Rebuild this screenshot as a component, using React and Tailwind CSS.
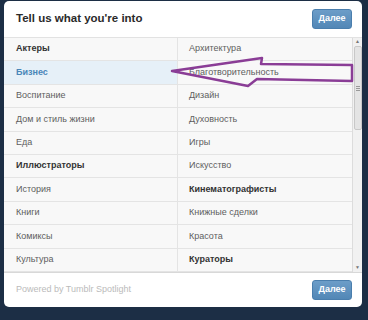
import React from 'react';

const rows = [
  [{ t: 'Актеры', b: true }, { t: 'Архитектура' }],
  [{ t: 'Бизнес', sel: true }, { t: 'Благотворительность' }],
  [{ t: 'Воспитание' }, { t: 'Дизайн' }],
  [{ t: 'Дом и стиль жизни' }, { t: 'Духовность' }],
  [{ t: 'Еда' }, { t: 'Игры' }],
  [{ t: 'Иллюстраторы', b: true }, { t: 'Искусство' }],
  [{ t: 'История' }, { t: 'Кинематографисты', b: true }],
  [{ t: 'Книги' }, { t: 'Книжные сделки' }],
  [{ t: 'Комиксы' }, { t: 'Красота' }],
  [{ t: 'Культура' }, { t: 'Кураторы', b: true }],
];

const Cell = ({ item, left }) => {
  let cls = 'h-[23.4px] flex items-center border-b border-[#e4e4e4] text-[9px] ';
  cls += left ? 'pl-[12px] border-r ' : 'pl-[11px] ';
  if (item.sel) cls += 'bg-[#e6f0f8] text-[#4a86b8] font-bold';
  else if (item.b) cls += 'bg-[#f8f8f8] text-[#333] font-bold';
  else cls += 'bg-[#f8f8f8] text-[#5e5e5e]';
  return <div className={cls}>{item.t}</div>;
};

const NextButton = () => (
  <button className="w-[40px] h-[20px] rounded-[3px] border border-[#4a7ead] bg-gradient-to-b from-[#6c9dc8] to-[#5287b6] text-white text-[9px] font-bold">
    Далее
  </button>
);

const App = () => {
  return (
    <div className="relative w-[368px] h-[320px] bg-[#1c2e45] pl-[4px] pt-[1px]" style={{ fontFamily: '"Liberation Sans", Arial, sans-serif' }}>
      <div className="w-[358px] h-[306px] rounded-[5px] bg-white flex flex-col overflow-hidden">
        {/* header */}
        <div className="h-[37px] shrink-0 flex items-center justify-between pl-[12px] pr-[10px] border-b border-[#e2e2e2]">
          <h1 className="text-[11.5px] font-bold text-[#2a2a2a]">Tell us what you're into</h1>
          <NextButton />
        </div>

        {/* list + scrollbar */}
        <div className="flex h-[235px] shrink-0 border-b border-[#d8d8d8]">
          <div className="w-[348px] grid grid-cols-2">
            {rows.map((r, i) => (
              <React.Fragment key={i}>
                <Cell item={r[0]} left />
                <Cell item={r[1]} />
              </React.Fragment>
            ))}
          </div>
          <div className="w-[10px] bg-[#f1f1f1] border-l border-[#dcdcdc] flex flex-col items-center">
            <div className="h-[8px] flex items-center text-[5px] text-[#777]">▲</div>
            <div className="w-[8px] h-[84px] rounded-[2px] bg-[#e4e4e4] border border-[#c8c8c8] flex items-center justify-center">
              <div className="w-[4px] flex flex-col gap-[1px]">
                <div className="h-px bg-[#999]" />
                <div className="h-px bg-[#999]" />
                <div className="h-px bg-[#999]" />
              </div>
            </div>
            <div className="flex-1" />
            <div className="h-[8px] flex items-center text-[5px] text-[#777]">▼</div>
          </div>
        </div>

        {/* footer */}
        <div className="flex-1 flex items-center justify-between pl-[12px] pr-[10px]">
          <span className="text-[9px] text-[#bbb]">Powered by Tumblr Spotlight</span>
          <NextButton />
        </div>
      </div>

      {/* hand-drawn arrow */}
      <svg className="absolute left-0 top-0" width="368" height="320">
        <polygon
          points="172,71 262,58 261,64 352,65 352,81 257,79 248,86"
          fill="none"
          stroke="#8a3d96"
          strokeWidth="2.5"
          strokeLinejoin="round"
        />
      </svg>
    </div>
  );
};

export default App;
